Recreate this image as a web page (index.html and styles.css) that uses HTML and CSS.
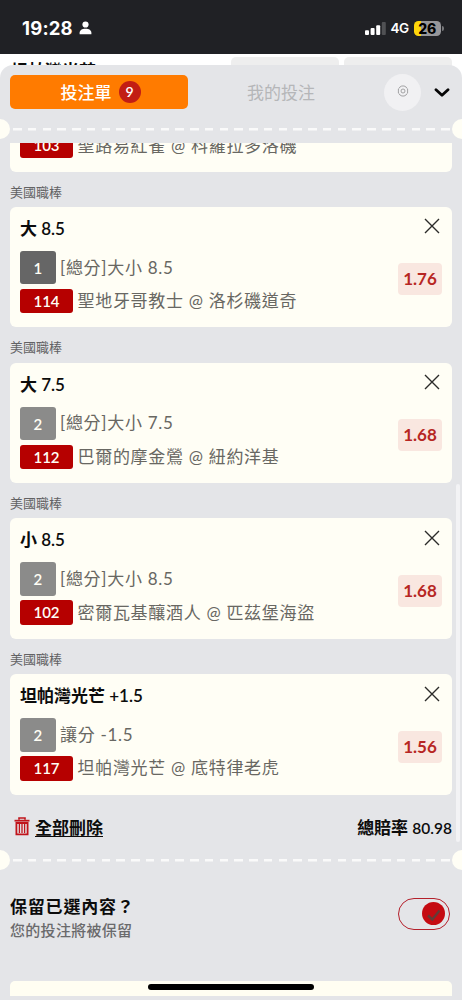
FILE: index.html
```html
<!DOCTYPE html>
<html lang="zh-Hant">
<head>
<meta charset="utf-8">
<title>投注單</title>
<link rel="stylesheet" href="styles.css">
</head>
<body>
<svg class="defs" width="0" height="0">
  <symbol id="close" viewBox="0 0 16 16"><path d="M1 1 L15 15 M15 1 L1 15" fill="none" stroke="#2b2b29" stroke-width="1.4"/></symbol>
</svg>
<div class="screen">
  <header class="status">
    <div class="clock">19:28
      <svg width="13" height="14" viewBox="0 0 13 14" fill="#fff"><circle cx="6.500" cy="3.500" r="3.100"/><path d="M.6 13.200 V12 C.6 9.300 3 7.800 6.500 7.800 S12.400 9.300 12.400 12 V13.200 Z"/></svg>
    </div>
    <div class="signals">
      <svg width="21" height="13" viewBox="0 0 21 13"><rect x="0" y="8.200" width="4" height="4.800" rx="1" fill="#fff"/><rect x="5.600" y="6" width="4" height="7" rx="1" fill="#fff"/><rect x="11.200" y="3.200" width="4" height="9.800" rx="1" fill="#fff"/><rect x="16.800" y="0" width="4" height="13" rx="1" fill="#505154"/></svg>
      <span class="net">4G</span>
      <span class="battery">26</span>
    </div>
  </header>
  <div class="behind"><span class="team">坦帕灣光芒</span><i class="slot"></i><i class="slot"></i></div>
  <main class="sheet">
    <nav class="tabs">
      <div class="tab active">投注單<b class="count">9</b></div>
      <div class="tab">我的投注</div>
      <div class="gear"><svg width="12" height="12" viewBox="0 0 12 12" fill="none" stroke="#8f8f91" stroke-width=".8"><path d="M4.300 1.200 L5 .9 Q6 1.300 7 .9 L9.200 2.100 Q9.400 3.200 10.600 3.900 V8.100 Q9.400 8.800 9.200 9.900 L7 11.100 Q6 10.700 5 11.100 L2.800 9.900 Q2.600 8.800 1.400 8.100 V3.900 Q2.600 3.200 2.800 2.100 Z"/><circle cx="6" cy="6" r="2"/></svg></div>
      <svg class="chevron" width="16" height="10" viewBox="0 0 16 10"><path d="M2 1.800 L8 7.300 L14 1.800" fill="none" stroke="#050505" stroke-width="2.800" stroke-linecap="round" stroke-linejoin="round"/></svg>
    </nav>
    <div class="perforation"></div>
    <section class="list">
      <article class="card partial">
        <div class="line"><b class="code">103</b>聖路易紅雀 @ 科羅拉多洛磯</div>
      </article>
      <h4>美國職棒</h4>
      <article class="card">
        <h3>大 8.5</h3>
        <div class="line"><b class="box dark">1</b>[總分]大小 8.5</div>
        <div class="line"><b class="code">114</b>聖地牙哥教士 @ 洛杉磯道奇</div>
        <svg class="close"><use href="#close"/></svg><b class="odds">1.76</b>
      </article>
      <h4>美國職棒</h4>
      <article class="card">
        <h3>大 7.5</h3>
        <div class="line"><b class="box">2</b>[總分]大小 7.5</div>
        <div class="line"><b class="code">112</b>巴爾的摩金鶯 @ 紐約洋基</div>
        <svg class="close"><use href="#close"/></svg><b class="odds">1.68</b>
      </article>
      <h4>美國職棒</h4>
      <article class="card">
        <h3>小 8.5</h3>
        <div class="line"><b class="box">2</b>[總分]大小 8.5</div>
        <div class="line"><b class="code">102</b>密爾瓦基釀酒人 @ 匹茲堡海盜</div>
        <svg class="close"><use href="#close"/></svg><b class="odds">1.68</b>
      </article>
      <h4>美國職棒</h4>
      <article class="card">
        <h3>坦帕灣光芒 +1.5</h3>
        <div class="line"><b class="box">2</b>讓分 -1.5</div>
        <div class="line"><b class="code">117</b>坦帕灣光芒 @ 底特律老虎</div>
        <svg class="close"><use href="#close"/></svg><b class="odds">1.56</b>
      </article>
      <div class="summary">
        <a class="clear"><svg width="16" height="19" viewBox="0 0 16 19" fill="none" stroke="#c0141b"><path d="M5 2.800 V1 H11 V2.800" stroke-width="1.600"/><path d="M.5 3.700 H15.500" stroke-width="1.800"/><path d="M2.400 6 V17.400 H13.600 V6 Z" stroke-width="1.800"/><path d="M5.400 7 V16 M8 7 V16 M10.600 7 V16" stroke-width="1.300"/></svg><span>全部刪除</span></a>
        <span class="total">總賠率 <span class="sum">80.98</span></span>
      </div>
      <i class="scrollbar"></i>
    </section>
    <div class="perforation lower"></div>
    <section class="keep">
      <div><h2>保留已選內容？</h2><p>您的投注將被保留</p></div>
      <div class="toggle"><i><svg width="16" height="14" viewBox="0 0 16 14"><path d="M2 7.500 L6.300 11.500 L13.500 2.500" fill="none" stroke="#633b36" stroke-width="2.4"/></svg></i></div>
    </section>
    <div class="panel"></div>
    <i class="home"></i>
  </main>
</div>
</body>
</html>
```
FILE: styles.css
```css
* { box-sizing: border-box; }
body { margin: 0; font-family: Lato, "Noto Sans CJK TC", sans-serif; color: #0c0c0c; }
h2, h3, h4, p { margin: 0; }
.defs { position: absolute; }
.screen { width: 462px; height: 1000px; overflow: hidden; background: #fff; display: flex; flex-direction: column; }

.status { height: 54px; flex: none; background: #202125; color: #fff; display: flex; justify-content: space-between; align-items: center; padding: 2px 21px 0 22px; font-family: Inter, sans-serif; }
.clock { display: flex; align-items: center; gap: 6px; font-size: 18.5px; font-weight: 700; line-height: 22px; letter-spacing: .2px; }
.signals { display: flex; align-items: center; }
.net { font-size: 13.5px; font-weight: 600; margin: 0 5px 0 4.5px; letter-spacing: -.5px; }
.battery { position: relative; width: 27.5px; height: 15px; border-radius: 4.5px; background: linear-gradient(90deg, #ffd60a 27%, #96969a 27%); color: #000; font-size: 14px; font-weight: 800; line-height: 15px; text-align: center; }
.battery::after { content: ""; position: absolute; right: -3px; top: 5px; width: 2px; height: 5px; border-radius: 0 2px 2px 0; background: #77787b; }

.behind { height: 27px; margin-bottom: -16px; flex: none; display: flex; padding: 3px 10px 0 11px; gap: 5px; }
.team { flex: 1; font-size: 17px; font-weight: 700; line-height: 27px; }
.slot { width: 108px; height: 24px; border-radius: 5px; background: #eeeeee; }

.sheet { position: relative; flex: 1; background: #e4e5e8; border-radius: 13px 13px 0 0; display: flex; flex-direction: column; }
.tabs { flex: none; height: 54px; padding: 0 12px 0 10px; display: flex; align-items: center; }
.tab { width: 178px; height: 34px; display: flex; align-items: center; justify-content: center; font-size: 17px; color: #b5b6b8; padding: 0 0 1px 8px; }
.active { background: #ff7b00; color: #fff; font-weight: 500; border-radius: 5px; padding-left: 3px; gap: 7px; }
.count { width: 22px; height: 22px; border-radius: 50%; background: #c21d14; font-size: 14px; font-weight: 600; line-height: 22px; text-align: center; }
.gear { margin-left: 18px; width: 37px; height: 37px; border-radius: 50%; background: #f1f1f3; display: flex; align-items: center; justify-content: center; padding-bottom: 2px; }
.chevron { margin: 2px -2px 0 13px; }

.perforation { flex: none; height: 24px; display: flex; align-items: center; justify-content: space-between; margin: -2px -10px 0; background: repeating-linear-gradient(90deg, #fafafa 0 8.500px, transparent 8.500px 14.760px) 22.500px 10.500px / 437px 2.500px no-repeat; }
.perforation::before, .perforation::after { content: ""; width: 20px; height: 20px; border-radius: 50%; background: #fffef5; }
.lower { margin-top: 5px; }

.list { position: relative; flex: none; height: 700px; margin-top: 2px; padding: 0 10px; overflow: hidden; display: flex; flex-direction: column; justify-content: flex-end; }
h4 { flex: none; height: 35.200px; line-height: 40px; font-size: 13px; font-weight: 400; color: #626264; }
.card { position: relative; flex: none; height: 120.500px; border-radius: 6px; background: #fffef5; padding: 10px; }
.partial { height: 38.500px; padding-top: 0; border-radius: 0 0 6px 6px; }
h3 { height: 34px; line-height: 24px; font-size: 17px; font-weight: 600; }
.line { display: flex; align-items: center; gap: 4.5px; color: #686762; font-size: 17px; line-height: 24px; letter-spacing: .7px; margin-bottom: 4.500px; white-space: nowrap; }
.box, .code { background: #b60000; color: #fffef5; width: 53px; height: 24.500px; line-height: 25px; border-radius: 3px; text-align: center; font-size: 15px; font-weight: 600; letter-spacing: 0; }
.box { width: 35.500px; height: 33.500px; line-height: 34px; background: #8b8b8a; }
.dark { background: #666; }
.close { position: absolute; top: 11.500px; right: 12.500px; width: 16px; height: 16px; }
.odds { position: absolute; right: 10px; top: 56.500px; width: 44px; height: 32px; border-radius: 4px; background: #f9e7e0; color: #b72623; font-size: 17px; line-height: 32px; text-align: center; }
.summary { flex: none; height: 48.500px; display: flex; justify-content: space-between; align-items: center; padding: 15px 0 0 4px; font-size: 17px; font-weight: 600; }
.clear { display: flex; align-items: center; gap: 5px; text-decoration: underline; text-underline-offset: 2px; text-decoration-thickness: 1px; }
.sum { font-size: 15.500px; }
.scrollbar { position: absolute; right: 2px; top: 341px; width: 4px; height: 358px; border-radius: 2px; background: #f3f3f5; }

.keep { flex: none; display: flex; justify-content: space-between; padding: 22.500px 12px 0 10px; height: 108.500px; }
h2 { font-size: 17px; line-height: 24px; font-weight: 600; letter-spacing: .8px; }
.keep p { font-size: 15px; line-height: 22px; font-weight: 500; color: #6a6a6c; letter-spacing: .3px; }
.toggle { width: 52px; height: 32px; margin-top: 3px; border: 1.500px solid #b4202b; border-radius: 16px; display: flex; align-items: center; justify-content: flex-end; padding-right: 4px; }
.toggle i { width: 23px; height: 23px; border-radius: 50%; background: #c50b12; display: flex; align-items: center; justify-content: center; padding-top: 3px; }
.panel { flex: none; height: 15.500px; margin: 0 10px; border-radius: 5px 5px 0 0; background: #fffef2; }
.home { position: absolute; left: 148px; bottom: 10px; width: 166px; height: 6px; border-radius: 3px; background: #000; }
```
